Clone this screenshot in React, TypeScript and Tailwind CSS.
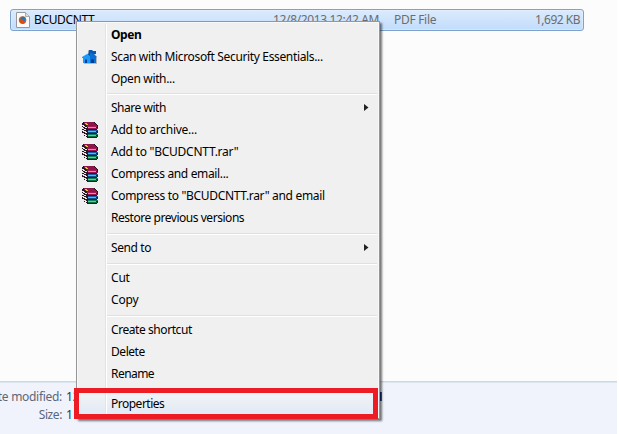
import type { ReactNode } from 'react';

function ShieldIcon() {
  return (
    <svg width="16" height="16" viewBox="0 0 16 16">
      <path d="M1 9h14v6H2z" fill="#666" opacity=".4" />
      <path d="M9 2h5v3l-2 1z" fill="#777" opacity=".4" />
      <path d="M0 8 5 5l3 2v7H1V9H0z" fill="#1a9bfb" />
      <path d="m5 5 3-1h3l4 4-1 1v5H8V7z" fill="#0a6fd3" />
      <path d="M6.500 1.500H8V7l-1.500-1z" fill="#174b8c" />
      <path d="M7 1h3l1 1h3v3h-3l-1-1H7z" fill="#0a58b4" />
      <path d="M3 10.500h2V14H3zM9 14v-3q1.500-2 3 0v3z" fill="#063c8f" />
    </svg>
  );
}

function RarIcon() {
  return (
    <svg width="16" height="16" viewBox="0 0 16 16" shapeRendering="crispEdges">
      <path d="M1 0h11l4 4v12H6l-6-4V1z" fill="#2a1620" />
      <path d="M2 0h9l4 3v1H6L1 1z" fill="#8c1747" />
      <path d="M3 1h2v1h1v1H4V2H3z" fill="#e2c52c" />
      <path d="M5 4h10v1H5z" fill="#a51c58" />
      <path d="M6 5h8v1H6z" fill="#e58ab4" />
      <path d="M6 6h10v1H6z" fill="#9b1450" />
      <path d="M6 8h10v1H6z" fill="#1261a5" />
      <path d="M6 9h8v1H6z" fill="#60b7e2" />
      <path d="M6 10h9v1H6z" fill="#0d538f" />
      <path d="M6 12h10v1H6z" fill="#108157" />
      <path d="M6 13h8v1H6z" fill="#56d0a2" />
      <path d="M6 14h9v1H6z" fill="#087348" />
      <path d="M0 3h2v1h1v1h2v1H3V5H1V4H0zM0 5h1v1h1v1h2v1H2V7H0zM0 8h2v1h2v1h1v1H3v-1H1V9H0zM0 11h2v1h2v1h1v1H3v-1H1v-1H0z" fill="#e8e8e8" />
      <path d="M0 0h1v1H0zM0 13h2v1h2v1h1v1H0zM13 0h3v3h-1V2h-1V1h-1zM15 7h1v1h-1zM15 11h1v1h-1zM15 15h1v1h-1z" fill="#f0f0f0" />
    </svg>
  );
}

function FileIcon() {
  return (
    <svg width="14" height="16" viewBox="0 0 14 16">
      <path d="M.5.5h9l4 4v11H.5z" fill="#fafafa" stroke="#999" />
      <path d="M9.5.5v4h4" fill="#ddd" stroke="#aaa" />
      <circle cx="6.500" cy="8" r="3.700" fill="#e8741c" />
      <circle cx="7" cy="7.200" r="2.600" fill="#2878b5" />
      <path d="M3 7c2-1 2 1 4 1 1 0 1 1 0 1 2 1 3 0 3-2 1 2-1 5-3 5-3 0-4-3-4-5z" fill="#d94b18" />
    </svg>
  );
}

function Item({ label, track, icon, arrow, height = 'h-[22px]' }: {
  label: string; track: string; icon?: ReactNode; arrow?: boolean; height?: string;
}) {
  return (
    <div className={`flex shrink-0 items-center ${height}`}>
      <div className="flex w-[34px] shrink-0 items-center pl-[5px]">{icon}</div>
      <span className={`whitespace-nowrap ${track}`}>{label}</span>
      {arrow && (
        <svg className="mr-[10px] ml-auto" width="5" height="8" viewBox="0 0 5 8">
          <path d="M0 0 4.500 3.500 0 7z" fill="#222" />
        </svg>
      )}
    </div>
  );
}

function Separator() {
  return (
    <div className="h-2 shrink-0 pt-1 pl-[30px]">
      <div className="h-[2px] w-[270px] border-t border-[#e0e0e0] bg-white" />
    </div>
  );
}

export default function App() {
  return (
    <div className="relative h-[434px] w-[619px] overflow-hidden bg-white font-['Noto_Sans','Open_Sans',sans-serif] text-[12px] leading-4 text-black">
      <div className="flex h-full w-[617px] flex-col bg-[#fcfcfc]">
        <div className="h-[381px] shrink-0 pt-[9px] pl-[10px]">
          <div className="flex h-[22px] w-[574px] items-center rounded-[3px] border border-[#7da2ce] bg-linear-to-b from-[#dcebfd] to-[#c1dcfc] pr-[3px] pl-[5px] shadow-[inset_0_0_0_1px_#e8f2fe80]">
            <FileIcon />
            <span className="ml-[4px] w-[239px] tracking-[-0.35px]">BCUDCNTT</span>
            <span className="w-[121px] whitespace-nowrap tracking-[-0.35px] text-[#6d6d6d]">12/8/2013 12:42 AM</span>
            <span className="tracking-[-0.3px] text-[#6d6d6d]">PDF File</span>
            <span className="ml-auto tracking-[-0.5px] text-[#6d6d6d]">1,692 KB</span>
          </div>
        </div>
        <div className="flex grow flex-col border-t border-[#c9d9ea] bg-[#f0f3fb] pt-[6px] text-[#5a6779] shadow-[inset_0_1px_0_#dce6f1]">
          <div className="flex h-[18px] items-center">
            <div className="flex w-[62px] shrink-0 justify-end whitespace-nowrap tracking-[-0.3px]">Date modified:</div>
            <span className="ml-1 text-[#1e395b]">12/8/2013</span>
          </div>
          <div className="flex h-[18px] items-center">
            <div className="w-[62px] text-right tracking-[-0.4px]">Size:</div>
            <span className="ml-1 text-[#1e395b]">1</span>
          </div>
        </div>
      </div>
      <div className="absolute top-[21px] left-[76px] flex h-[398px] w-[304px] flex-col border border-[#979797] bg-[#f0f0f0] pt-[2px] shadow-[2px_2px_2px_#0008,inset_0_0_0_1px_#f8f8f8]">
        <div className="absolute top-[2px] bottom-[2px] left-[28px] w-[2px] border-l border-[#e2e3e3] bg-white" />
        <Item label="Open" track="font-bold tracking-[-0.4px]" />
        <Item label="Scan with Microsoft Security Essentials..." track="tracking-[-0.35px]" icon={<ShieldIcon />} />
        <Item label="Open with..." track="tracking-[-0.35px]" height="h-[21px]" />
        <Separator />
        <Item label="Share with" track="tracking-[-0.47px]" arrow />
        <Item label="Add to archive..." track="tracking-[-0.27px]" icon={<RarIcon />} />
        <Item label={'Add to "BCUDCNTT.rar"'} track="tracking-[-0.25px]" icon={<RarIcon />} />
        <Item label="Compress and email..." track="tracking-[-0.35px]" icon={<RarIcon />} />
        <Item label={'Compress to "BCUDCNTT.rar" and email'} track="tracking-[-0.32px]" icon={<RarIcon />} />
        <Item label="Restore previous versions" track="tracking-[-0.46px]" />
        <Separator />
        <Item label="Send to" track="tracking-[-0.4px]" arrow />
        <Separator />
        <Item label="Cut" track="tracking-[-0.2px]" />
        <Item label="Copy" track="tracking-[-0.2px]" />
        <Separator />
        <Item label="Create shortcut" track="tracking-[-0.43px]" />
        <Item label="Delete" track="tracking-[-0.45px]" />
        <Item label="Rename" track="tracking-[-0.55px]" />
        <Separator />
        <div className="mx-[2px] -my-px h-[23px] border-t border-[#aecff7] bg-linear-to-b from-[#f1f3f5] to-[#e2eaf6]">
          <div className="-ml-[2px]"><Item label="Properties" track="tracking-[-0.5px]" /></div>
        </div>
      </div>
      <div className="absolute top-[392px] left-[380px] h-[9px] w-[2px] border-l border-[#0d1746] bg-[#4c285d]" />
      <div className="absolute top-[388px] left-[74px] h-[31px] w-[304px] border-[5px] border-[#ed1c24]" />
    </div>
  );
}
